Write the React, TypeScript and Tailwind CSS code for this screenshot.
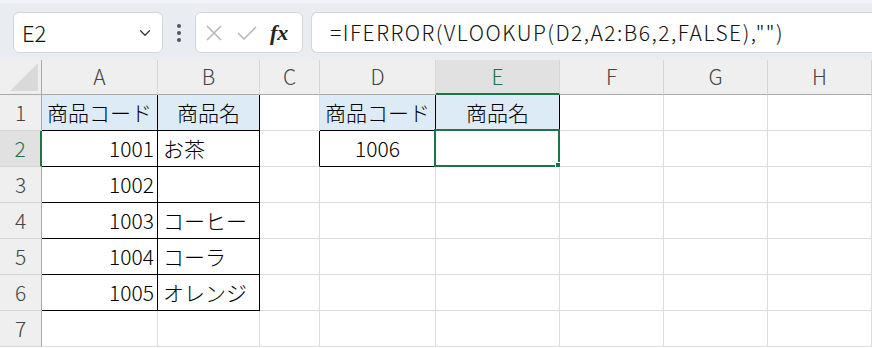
import { ChevronDown } from 'lucide-react';

const cols = ['A', 'B', 'C', 'D', 'E', 'F', 'G', 'H'];

type Cell = { text?: string; align?: 'left' | 'right' | 'center'; head?: boolean; r?: boolean; b?: boolean; sel?: boolean };

// row data: one entry per column A..H
const rows: Cell[][] = [
  [
    { text: '商品コード', align: 'center', head: true, r: true, b: true },
    { text: '商品名', align: 'center', head: true, r: true, b: true },
    {},
    { text: '商品コード', align: 'center', head: true, r: true, b: true },
    { text: '商品名', align: 'center', head: true, r: true, b: true },
    {}, {}, {},
  ],
  [
    { text: '1001', align: 'right', r: true, b: true },
    { text: 'お茶', align: 'left', r: true, b: true },
    { r: true },
    { text: '1006', align: 'center', r: true, b: true },
    { sel: true },
    {}, {}, {},
  ],
  [
    { text: '1002', align: 'right', r: true, b: true },
    { r: true, b: true },
    {}, {}, {}, {}, {}, {},
  ],
  [
    { text: '1003', align: 'right', r: true, b: true },
    { text: 'コーヒー', align: 'left', r: true, b: true },
    {}, {}, {}, {}, {}, {},
  ],
  [
    { text: '1004', align: 'right', r: true, b: true },
    { text: 'コーラ', align: 'left', r: true, b: true },
    {}, {}, {}, {}, {}, {},
  ],
  [
    { text: '1005', align: 'right', r: true, b: true },
    { text: 'オレンジ', align: 'left', r: true, b: true },
    {}, {}, {}, {}, {}, {},
  ],
  [{}, {}, {}, {}, {}, {}, {}, {}],
];

const GridCell = ({ cell }: { cell: Cell }) => {
  const justify = cell.align === 'right' ? 'justify-end pr-[3px]' : cell.align === 'center' ? 'justify-center' : 'justify-start pl-[5px]';
  return (
    <div
      className={`relative flex items-center ${justify} border-r border-b ${cell.r ? 'border-r-black' : 'border-r-[#dcdcdc]'} ${cell.b ? 'border-b-black' : 'border-b-[#dcdcdc]'} ${cell.head ? 'bg-[#ddebf7]' : 'bg-white'} text-[21px] text-black whitespace-nowrap overflow-visible`}
    >
      {cell.text}
      {cell.sel && (
        <div className="absolute -left-[2px] -top-[2px] -right-[1px] -bottom-[1px] border-2 border-[#217346]">
          <div className="absolute -right-[5px] -bottom-[5px] w-[8px] h-[8px] bg-[#217346] border border-white" />
        </div>
      )}
    </div>
  );
};

export default function App() {
  return (
    <div className="w-[872px] h-[348px] overflow-hidden bg-white font-light font-['Noto_Sans_CJK_JP','Noto_Sans',sans-serif]">
      {/* formula bar */}
      <div className="h-[60px] bg-[#e9edf1] flex items-center gap-2 pl-[13px] pt-[2px] border-t-[3px] border-[#f2f4f7]">
        <div className="w-[150px] h-[41px] bg-white rounded-md border border-[#d3d6da] flex items-center justify-between pl-[8px] pr-[8px]">
          <span className="text-[22px] text-[#111]">E2</span>
          <ChevronDown size={18} strokeWidth={1.6} className="text-[#333]" />
        </div>
        <div className="w-[16px] flex flex-col items-center gap-[3px]">
          <span className="w-[4px] h-[4px] rounded-full bg-[#555]" />
          <span className="w-[4px] h-[4px] rounded-full bg-[#555]" />
          <span className="w-[4px] h-[4px] rounded-full bg-[#555]" />
        </div>
        <div className="w-[108px] h-[41px] bg-white rounded-md border border-[#d3d6da] flex items-center px-[8px] gap-[12px]">
          <svg width="20" height="20" viewBox="0 0 20 20" fill="none" stroke="#b5b5b5" strokeWidth="1.5">
            <path d="M3 3L17 17M17 3L3 17" />
          </svg>
          <svg width="22" height="20" viewBox="0 0 22 20" fill="none" stroke="#b5b5b5" strokeWidth="1.5">
            <path d="M2 10L8 16L20 4" />
          </svg>
          <span className="font-['Liberation_Serif',serif] italic font-bold text-[22px] text-[#222] leading-none">fx</span>
        </div>
        <div className="flex-1 h-[41px] bg-white rounded-l-md border border-r-0 border-[#d3d6da] flex items-center pl-[18px]">
          <span className="text-[21px] tracking-[1.5px] text-[#111] whitespace-nowrap">=IFERROR(VLOOKUP(D2,A2:B6,2,FALSE),"")</span>
        </div>
      </div>

      {/* sheet */}
      <div className="grid grid-cols-[42px_116px_102px_60px_116px_124px_104px_104px_104px] grid-rows-[35px_repeat(7,36px)]">
        <div className="relative bg-[#efefef] border-r border-b border-[#a9a9a9] overflow-hidden">
          <div className="absolute right-[3px] bottom-[3px] w-0 h-0 border-l-[28px] border-l-transparent border-b-[28px] border-b-[#d9d9d9]" />
        </div>
        {cols.map((c) => (
          <div
            key={c}
            className={`flex items-center justify-center text-[21px] border-r border-r-[#d6d6d6] ${c === 'E' ? 'bg-[#e1e1e1] text-[#217346] border-b-2 border-b-[#217346]' : 'bg-[#efefef] text-[#444] border-b border-b-[#a9a9a9]'}`}
          >
            {c}
          </div>
        ))}
        {rows.map((row, i) => (
          <>
            <div
              key={`h${i}`}
              className={`flex items-center justify-center text-[21px] border-b border-b-[#d6d6d6] ${i === 1 ? 'bg-[#e1e1e1] text-[#217346] border-r-2 border-r-[#217346]' : 'bg-[#efefef] text-[#444] border-r border-r-[#a9a9a9]'}`}
            >
              {i + 1}
            </div>
            {row.map((cell, j) => (
              <GridCell key={`${i}-${j}`} cell={cell} />
            ))}
          </>
        ))}
      </div>
    </div>
  );
}
